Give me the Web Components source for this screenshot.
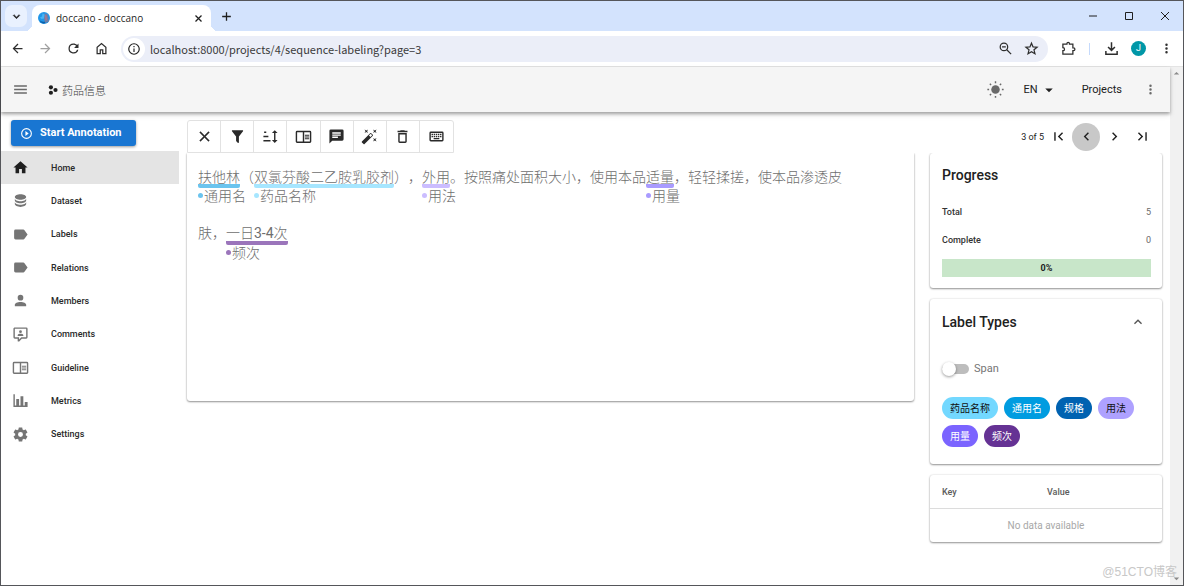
<!DOCTYPE html>
<html lang="zh-CN">
<head>
<meta charset="utf-8">
<title>doccano - doccano</title>
<style>
  html, body { height: 100%; margin: 0; }
  body { font: 10px/14px Roboto, "Noto Sans CJK SC", sans-serif; color: #212121; background: #fff; }
</style>
</head>
<body>
<browser-window>
  <app-bar slot="bar"></app-bar>
  <side-nav slot="nav">
    <nav-item icon="home" active>Home</nav-item>
    <nav-item icon="database">Dataset</nav-item>
    <nav-item icon="label">Labels</nav-item>
    <nav-item icon="label">Relations</nav-item>
    <nav-item icon="account">Members</nav-item>
    <nav-item icon="comment">Comments</nav-item>
    <nav-item icon="book">Guideline</nav-item>
    <nav-item icon="chart">Metrics</nav-item>
    <nav-item icon="cog">Settings</nav-item>
  </side-nav>
  <annotation-page></annotation-page>
</browser-window>

<script>
const define = (name, html, setup) => {
  const template = document.createElement('template');
  template.innerHTML = html;
  customElements.define(name, class extends HTMLElement {
    constructor() {
      super();
      this.attachShadow({ mode: 'open' }).append(template.content.cloneNode(true));
    }
    connectedCallback() { if (setup) setup(this, this.shadowRoot); }
  });
};

const ICONS = {
  home: '<path d="M10,20V14H14V20H19V12H22L12,3L2,12H5V20H10Z"/>',
  database: '<path d="M12,3C7.58,3 4,4.79 4,7C4,9.21 7.58,11 12,11C16.42,11 20,9.21 20,7C20,4.79 16.42,3 12,3M4,9V12C4,14.21 7.58,16 12,16C16.42,16 20,14.21 20,12V9C20,11.21 16.42,13 12,13C7.58,13 4,11.21 4,9M4,14V17C4,19.21 7.58,21 12,21C16.42,21 20,19.21 20,17V14C20,16.21 16.42,18 12,18C7.58,18 4,16.21 4,14Z"/>',
  label: '<path d="M17.63,5.84C17.27,5.33 16.67,5 16,5H5A2,2 0 0,0 3,7V17A2,2 0 0,0 5,19H16C16.67,19 17.27,18.66 17.63,18.15L22,12L17.63,5.84Z"/>',
  account: '<path d="M12,4A4,4 0 0,1 16,8A4,4 0 0,1 12,12A4,4 0 0,1 8,8A4,4 0 0,1 12,4M12,14C16.42,14 20,15.79 20,18V20H4V18C4,15.79 7.58,14 12,14Z"/>',
  comment: '<path d="M9,22A1,1 0 0,1 8,21V18H4A2,2 0 0,1 2,16V4C2,2.89 2.9,2 4,2H20A2,2 0 0,1 22,4V16A2,2 0 0,1 20,18H13.9L10.2,21.71C10,21.9 9.75,22 9.5,22H9M10,16V19.08L13.08,16H20V4H4V16H10M16,14H8V13C8,11.67 10.67,11 12,11C13.33,11 16,11.67 16,13V14M12,6A2,2 0 0,1 14,8A2,2 0 0,1 12,10A2,2 0 0,1 10,8A2,2 0 0,1 12,6Z"/>',
  book: '<path d="M21,4H3A2,2 0 0,0 1,6V19A2,2 0 0,0 3,21H21A2,2 0 0,0 23,19V6A2,2 0 0,0 21,4M3,19V6H11V19H3M21,19H13V6H21V19M14,9.5H20V11H14V9.5M14,12H20V13.5H14V12M14,14.5H20V16H14V14.5Z"/>',
  chart: '<path d="M22,21H2V3H4V19H6V10H10V19H12V6H16V19H18V14H22V21Z"/>',
  cog: '<path d="M12,15.5A3.5,3.5 0 0,1 8.5,12A3.5,3.5 0 0,1 12,8.5A3.5,3.5 0 0,1 15.5,12A3.5,3.5 0 0,1 12,15.5M19.43,12.97C19.47,12.65 19.5,12.33 19.5,12C19.5,11.67 19.47,11.34 19.43,11L21.54,9.37C21.73,9.22 21.78,8.95 21.66,8.73L19.66,5.27C19.54,5.05 19.27,4.96 19.05,5.05L16.56,6.05C16.04,5.66 15.5,5.32 14.87,5.07L14.5,2.42C14.46,2.18 14.25,2 14,2H10C9.75,2 9.54,2.18 9.5,2.42L9.13,5.07C8.5,5.32 7.96,5.66 7.44,6.05L4.95,5.05C4.73,4.96 4.46,5.05 4.34,5.27L2.34,8.73C2.21,8.95 2.27,9.22 2.46,9.37L4.57,11C4.53,11.34 4.5,11.67 4.5,12C4.5,12.33 4.53,12.65 4.57,12.97L2.46,14.63C2.27,14.78 2.21,15.05 2.34,15.27L4.34,18.73C4.46,18.95 4.73,19.03 4.95,18.95L7.44,17.94C7.96,18.34 8.5,18.68 9.13,18.93L9.5,21.58C9.54,21.82 9.75,22 10,22H14C14.25,22 14.46,21.82 14.5,21.58L14.87,18.93C15.5,18.67 16.04,18.34 16.56,17.94L19.05,18.95C19.27,19.03 19.54,18.95 19.66,18.73L21.66,15.27C21.78,15.05 21.73,14.78 21.54,14.63L19.43,12.97Z"/>',
  play: '<path d="M12,20C7.59,20 4,16.41 4,12C4,7.59 7.59,4 12,4C16.41,4 20,7.59 20,12C20,16.41 16.41,20 12,20M12,2A10,10 0 0,0 2,12A10,10 0 0,0 12,22A10,10 0 0,0 22,12A10,10 0 0,0 12,2M10,16.5L16,12L10,7.5V16.5Z"/>',
  close: '<path d="M19,6.41L17.59,5L12,10.59L6.41,5L5,6.41L10.59,12L5,17.59L6.41,19L12,13.41L17.59,19L19,17.59L13.41,12L19,6.41Z" stroke="currentColor" stroke-width=".4"/>',
  filter: '<path d="M14,12V19.88C14.04,20.18 13.94,20.5 13.71,20.71C13.32,21.1 12.69,21.1 12.3,20.71L10.29,18.7C10.06,18.47 9.96,18.16 10,17.87V12H9.97L4.21,4.62C3.87,4.19 3.95,3.56 4.38,3.22C4.57,3.08 4.78,3 5,3H19C19.22,3 19.43,3.08 19.62,3.22C20.05,3.56 20.13,4.19 19.79,4.62L14.03,12H14Z"/>',
  sort: '<path d="M19,7H22L18,3L14,7H17V17H14L18,21L22,17H19ZM2,17H12V19H2ZM6,5V7H3V5ZM2,11H9V13H2Z"/>',
  message: '<path d="M20,2H4A2,2 0 0,0 2,4V22L6,18H20A2,2 0 0,0 22,16V4A2,2 0 0,0 20,2M6,9H18V11H6V9M14,14H6V12H14V14M18,8H6V6H18V8Z"/>',
  wand: '<path d="M7.5,5.6L5,7L6.4,4.5L5,2L7.5,3.4L10,2L8.6,4.5L10,7L7.5,5.6M19.5,15.4L22,14L20.6,16.5L22,19L19.5,17.6L17,19L18.4,16.5L17,14L19.5,15.4M22,2L20.6,4.5L22,7L19.5,5.6L17,7L18.4,4.5L17,2L19.5,3.4L22,2M13.34,12.78L15.78,10.34L13.66,8.22L11.22,10.66L13.34,12.78M14.37,7.29L16.71,9.63C17.1,10 17.1,10.65 16.71,11.04L5.04,22.71C4.65,23.1 4,23.1 3.63,22.71L1.29,20.37C0.9,20 0.9,19.35 1.29,18.96L12.96,7.29C13.35,6.9 14,6.9 14.37,7.29Z"/>',
  trash: '<path d="M6,19A2,2 0 0,0 8,21H16A2,2 0 0,0 18,19V7H6V19M8,9H16V19H8V9M15.5,4L14.5,3H9.5L8.5,4H5V6H19V4H15.5Z"/>',
  keyboard: '<path d="M4,5A2,2 0 0,0 2,7V17A2,2 0 0,0 4,19H20A2,2 0 0,0 22,17V7A2,2 0 0,0 20,5H4M4,7H20V17H4V7M5,8V10H7V8H5M8,8V10H10V8H8M11,8V10H13V8H11M14,8V10H16V8H14M17,8V10H19V8H17M5,11V13H7V11H5M8,11V13H10V11H8M11,11V13H13V11H11M14,11V13H16V11H14M17,11V13H19V11H17M8,14V16H16V14H8Z"/>',
  first: '<path d="M18.41,16.59L13.82,12L18.41,7.41L17,6L11,12L17,18L18.41,16.59M6,6H8V18H6V6Z"/>',
  prev: '<path d="M15.41,16.58L10.83,12L15.41,7.41L14,6L8,12L14,18L15.41,16.58Z"/>',
  next: '<path d="M8.59,16.58L13.17,12L8.59,7.41L10,6L16,12L10,18L8.59,16.58Z"/>',
  last: '<path d="M5.59,7.41L10.18,12L5.59,16.59L7,18L13,12L7,6L5.59,7.41M16,6H18V18H16V6Z"/>',
  up: '<path d="M7.41,15.41L12,10.83L16.59,15.41L18,14L12,8L6,14L7.41,15.41Z"/>',
  down: '<path d="M7.41,8.59L12,13.17L16.59,8.59L18,10L12,16L6,10L7.41,8.59Z" stroke="currentColor"/>',
  caret: '<path d="M7,10L12,15L17,10H7Z"/>',
  dots: '<path d="M12,16A2,2 0 1,1 12,20A2,2 0 0,1 12,16M12,10A2,2 0 1,1 12,14A2,2 0 0,1 12,10M12,4A2,2 0 1,1 12,8A2,2 0 0,1 12,4Z"/>',
  menu: '<path d="M3,6H21V8H3V6M3,11H21V13H3V11M3,16H21V18H3V16Z"/>',
  sun: '<circle cx="12" cy="12" r="6"/><g stroke="currentColor" stroke-width="2"><path d="M12 .5v2.500M12 21v2.500M.5 12H3M21 12h2.500M4 4l1.800 1.800M18.200 18.200L20 20M4 20l1.800-1.800M18.200 5.800L20 4"/></g>',
  project: '<circle cx="7" cy="5.500" r="5"/><circle cx="7" cy="18.500" r="5"/><circle cx="18" cy="12" r="5"/>',
  back: '<path d="M20,11V13H8L13.5,18.5L12.08,19.92L4.16,12L12.08,4.08L13.5,5.5L8,11H20Z"/>',
  forward: '<path d="M4,11V13H16L10.5,18.5L11.92,19.92L19.84,12L11.92,4.08L10.5,5.5L16,11H4Z"/>',
  reload: '<path d="M17.65,6.35C16.2,4.9 14.21,4 12,4A8,8 0 1,0 19.73,14H17.65A6,6 0 1,1 12,6C13.66,6 15.14,6.69 16.22,7.78L13,11H20V4L17.65,6.35Z"/>',
  house: '<path d="M5 20V10l7-6 7 6v10h-5v-6h-4v6z" fill="none" stroke="currentColor" stroke-width="2"/>',
  info: '<circle cx="12" cy="12" r="9" fill="none" stroke="currentColor" stroke-width="2"/><path d="M11 11h2v6h-2zM11 7h2v2h-2z"/>',
  zoomout: '<circle cx="9.500" cy="9.500" r="6" fill="none" stroke="currentColor" stroke-width="2"/><path d="M14 14l7 7M6.500 9.500h6" stroke="currentColor" stroke-width="2"/>',
  star: '<path d="M12 3.500l2.500 5.900 6.400.500-4.900 4.200 1.500 6.200L12 17l-5.500 3.300L8 14.100 3.100 9.900l6.400-.500z" fill="none" stroke="currentColor" stroke-width="2"/>',
  puzzle: '<path d="M3 5h6.500V4a2 2 0 014 0v1H19v6h1a2 2 0 010 4.500h-1V21H3v-5.500c3.500 0 3.500-5 0-5z" fill="none" stroke="currentColor" stroke-width="2"/>',
  download: '<path d="M12 2v13M6.500 9.500L12 15l5.500-5.500M3 16v5h18v-5" fill="none" stroke="currentColor" stroke-width="2.400"/>',
  plus: '<path d="M12 4v16M4 12h16" stroke="currentColor" stroke-width="2.400"/>',
  tabclose: '<path d="M4 4l16 16M20 4L4 20" stroke="currentColor" stroke-width="3.400"/>',
  cross: '<path d="M4 4l16 16M20 4L4 20" stroke="currentColor" stroke-width="2"/>',
  minimize: '<path d="M4 12h16" stroke="currentColor" stroke-width="2"/>',
  maximize: '<path d="M5 5h14v14H5z" fill="none" stroke="currentColor" stroke-width="2"/>',
  favicon: '<circle cx="12" cy="12" r="12" fill="#2196e8"/><path d="M13 3l6 1 3 15-8 3-2-9z" fill="#6d7fa8"/><path d="M9 3l4 2-1 8-5 1-3-3 4-2z" fill="#48b4f5"/><path d="M3 16c3 3 6 4 10 3l2 3c-5 2-10 0-12-6z" fill="#0d5fa8"/><path d="M14 6l3 1 1 9-3 1z" fill="#b0768c"/>'
};

define('ui-icon', `
<style>
  :host { display: inline-flex; flex: none; width: var(--size, 17px); height: var(--size, 17px); }
  svg { width: 100%; height: 100%; fill: currentColor; }
</style>
<svg viewBox="0 0 24 24" aria-hidden="true"></svg>`, (host, root) => {
  root.querySelector('svg').innerHTML = ICONS[host.getAttribute('name')];
});

define('icon-button', `
<style>
  :host { display: inline-flex; flex: none; }
  button { display: flex; align-items: center; justify-content: center; width: var(--box, 28px); height: var(--box, 28px);
    padding: 0; border: 0; border-radius: 50%; background: var(--fill, none); color: inherit; }
</style>
<button></button>`, (host, root) => {
  const button = root.querySelector('button');
  button.setAttribute('aria-label', host.getAttribute('label'));
  button.innerHTML = `<ui-icon name="${host.getAttribute('name')}"></ui-icon>`;
});

define('tab-strip', `
<style>
  :host { display: flex; align-items: flex-end; height: 30px; background: #d3e3fd; color: #1f1f1f; }
  .pick { display: flex; align-items: center; justify-content: center; width: 22px; height: 22px; margin: 0 5px 4px 4px; padding: 0;
    border: 0; border-radius: 7px; background: #e9f1fe; color: inherit; --size: 13px; }
  .tab { display: flex; align-items: center; box-sizing: border-box; width: 179px; height: 26px; padding: 0 4px 0 6px;
    border-radius: 8px 8px 0 0; background: #fff; position: relative; font: 10px/14px "Open Sans", "Noto Sans", sans-serif; }
  .tab::before, .tab::after { content: ""; position: absolute; bottom: 0; width: 7px; height: 7px; }
  .tab::before { right: 100%; background: radial-gradient(circle at 0 0, transparent 7px, #fff 7px); }
  .tab::after { left: 100%; background: radial-gradient(circle at 100% 0, transparent 7px, #fff 7px); }
  .tab span { flex: 1; margin-left: 6px; }
  .tab > ui-icon { --size: 12px; }
  .tab icon-button { --box: 18px; --size: 9px; }
  .new { --box: 22px; --size: 13px; margin: 0 auto 4px 4px; }
  .controls { display: flex; gap: 8px; margin: 0 4px 1px 0; --size: 12px; }
</style>
<button class="pick" aria-label="Search tabs"><ui-icon name="down"></ui-icon></button>
<div class="tab"><ui-icon name="favicon"></ui-icon><span>doccano - doccano</span><icon-button name="tabclose" label="Close tab"></icon-button></div>
<icon-button class="new" name="plus" label="New tab"></icon-button>
<div class="controls">
  <icon-button name="minimize" label="Minimize"></icon-button>
  <icon-button name="maximize" label="Maximize"></icon-button>
  <icon-button name="cross" label="Close window"></icon-button>
</div>`);

define('address-bar', `
<style>
  :host { display: flex; align-items: center; height: 35px; padding: 0 3px 0 2px; background: #fff; color: #2e2e2e; border-bottom: 1px solid #e4e4e4; --size: 15px; }
  .off { color: #a0a0a0; }
  .pill { flex: 1; display: flex; align-items: center; height: 26px; margin: 0 6px; padding: 0 4px 0 2px; border-radius: 13px; background: #ebeef8; }
  .site { --box: 22px; --fill: #fff; --size: 14px; color: #1f1f1f; }
  .pill input ~ icon-button { --box: 26px; }
  input { flex: 1; min-width: 0; margin: 0 0 0 5px; padding: 0; border: 0; background: none; color: #3a3a3a; font: 11px/16px "Noto Sans CJK SC", sans-serif; }
  hr { width: 1px; height: 12px; margin: 0 7px; border: 0; background: #c5dafc; }
  .user { width: 15px; height: 15px; margin: 0 6px; padding: 0; border: 0; border-radius: 50%; background: #0097a7; color: #fff; font: 9px/15px Roboto, sans-serif; }
</style>
<icon-button name="back" label="Back"></icon-button>
<icon-button class="off" name="forward" label="Forward"></icon-button>
<icon-button name="reload" label="Reload"></icon-button>
<icon-button name="house" label="Home page"></icon-button>
<div class="pill">
  <icon-button class="site" name="info" label="Site information"></icon-button>
  <input aria-label="Address" value="localhost:8000/projects/4/sequence-labeling?page=3">
  <icon-button name="zoomout" label="Zoom"></icon-button>
  <icon-button name="star" label="Bookmark"></icon-button>
</div>
<icon-button name="puzzle" label="Extensions"></icon-button>
<hr>
<icon-button name="download" label="Downloads"></icon-button>
<button class="user" aria-label="Profile">J</button>
<icon-button name="dots" label="Browser menu"></icon-button>`);

define('browser-window', `
<style>
  :host { display: flex; flex-direction: column; box-sizing: border-box; min-height: 100%; border: 1px solid #55565a; background: #fff; }
  .view { flex: 1; display: flex; }
  .app { flex: 1; min-width: 0; }
  .body { display: flex; align-items: flex-start; }
  slot[name=nav] { display: block; flex: none; width: 178px; }
  .page { flex: 1; min-width: 0; }
  .scroll { display: flex; flex-direction: column; justify-content: space-between; align-items: center; width: 13px; background: #f1f1f1; color: #8a8a8a; --size: 13px; }
  .scroll ui-icon:first-child { transform: rotate(180deg); }
  .mark { position: absolute; right: 7px; bottom: 4px; color: #c8c8c8; font: 12px/20px "Liberation Sans", "Noto Sans CJK SC", sans-serif; }
</style>
<tab-strip></tab-strip>
<address-bar></address-bar>
<div class="view">
  <div class="app">
    <slot name="bar"></slot>
    <div class="body"><slot name="nav"></slot><div class="page"><slot></slot></div></div>
  </div>
  <div class="scroll"><ui-icon name="caret"></ui-icon><ui-icon name="caret"></ui-icon></div>
</div>
<div class="mark">@51CTO博客</div>`);

define('app-bar', `
<style>
  :host { display: flex; align-items: center; height: 45px; padding: 0 6px 0 5px; background: #f5f5f5; color: #6a6a6a;
    box-shadow: 0 2px 3px rgba(0,0,0,.3), 0 3px 6px rgba(0,0,0,.1); position: relative; z-index: 2; }
  .title { display: flex; align-items: center; gap: 4px; margin: 0 auto 0 14px; color: #1f1f1f; --size: 10px; text-decoration: none; }
  .title span { color: #3c3c3c; font: 300 11px/16px "Noto Sans CJK SC", sans-serif; }
  button, .link { display: flex; align-items: center; gap: 2px; height: 28px; padding: 0; border: 0; background: none; color: #212121;
    font: 400 11px/14px Roboto, sans-serif; text-decoration: none; }
  button { margin: 0 24px 0 14px; --size: 18px; }
  .more { --size: 15px; margin-left: 14px; }
</style>
<icon-button name="menu" label="Toggle navigation"></icon-button>
<a class="title" href="#"><ui-icon name="project"></ui-icon><span>药品信息</span></a>
<icon-button name="sun" label="Toggle theme"></icon-button>
<button>EN<ui-icon name="caret"></ui-icon></button>
<a class="link" href="#">Projects</a>
<icon-button class="more" name="dots" label="More"></icon-button>`);

define('side-nav', `
<style>
  :host { display: block; padding-top: 8px; }
  button { display: flex; align-items: center; gap: 7px; height: 26px; margin: 0 0 5px 10px; padding: 0 14px 0 9px; border: 0; border-radius: 3px;
    background: #1976d2; color: #fff; font: 700 11px/14px Roboto, sans-serif; box-shadow: 0 1px 3px rgba(0,0,0,.4); --size: 13px; }
  nav { display: grid; grid-auto-rows: 1fr; height: 300px; }
</style>
<button><ui-icon name="play"></ui-icon>Start Annotation</button>
<nav><slot></slot></nav>`);

define('nav-item', `
<style>
  :host { display: flex; color: #757575; }
  :host([active]) { background: #e4e4e4; color: #1f1f1f; }
  a { flex: 1; display: flex; align-items: center; gap: 22px; padding: 0 11px; color: inherit; text-decoration: none; }
  span { color: #2a2a2a; font: 500 9px/14px Roboto, sans-serif; }
</style>
<a href="#"><i></i><span><slot></slot></span></a>`, (host, root) => {
  root.querySelector('i').outerHTML = `<ui-icon name="${host.getAttribute('icon')}"></ui-icon>`;
});

define('tool-bar', `
<style>
  :host { display: grid; grid-template-columns: repeat(8, 1fr); box-sizing: border-box; width: 267px; height: 33px; border: 1px solid #e2e2e2; border-radius: 3px 3px 0 0; color: #2a2a2a; }
  button { display: flex; align-items: center; justify-content: center; padding: 0; border: 0; border-right: 1px solid #e2e2e2; background: none; color: inherit; }
  button:last-child { border-right: 0; }
</style>
<button aria-label="Clear"><ui-icon name="close"></ui-icon></button>
<button aria-label="Filter"><ui-icon name="filter"></ui-icon></button>
<button aria-label="Sort"><ui-icon name="sort"></ui-icon></button>
<button aria-label="Guideline"><ui-icon name="book"></ui-icon></button>
<button aria-label="Comments"><ui-icon name="message"></ui-icon></button>
<button aria-label="Auto labeling"><ui-icon name="wand"></ui-icon></button>
<button aria-label="Delete"><ui-icon name="trash"></ui-icon></button>
<button aria-label="Shortcuts"><ui-icon name="keyboard"></ui-icon></button>`);

define('page-nav', `
<style>
  :host { display: flex; align-items: center; color: #212121; font-size: 9px; }
  .on { --fill: #c8c8c8; }
</style>
<span>3 of 5</span>
<icon-button name="first" label="First page"></icon-button>
<icon-button class="on" name="prev" label="Previous page"></icon-button>
<icon-button name="next" label="Next page"></icon-button>
<icon-button name="last" label="Last page"></icon-button>`);

define('entity-span', `
<style>
  :host { display: block; flex: none; }
  .text { display: block; border-bottom: 4px solid var(--mark); border-radius: 0 0 2px 2px; }
  .label { display: flex; align-items: center; gap: 1px; width: 0; white-space: nowrap; line-height: 14px; }
  .label::before { content: ""; flex: none; width: 5px; height: 5px; border-radius: 50%; background: var(--mark); }
</style>
<span class="text"><slot></slot></span><span class="label"></span>`, (host, root) => {
  host.style.setProperty('--mark', host.getAttribute('color'));
  root.querySelector('.label').textContent = host.getAttribute('label');
});

define('doc-card', `
<style>
  :host { display: block; box-sizing: border-box; min-height: 248px; padding: 15px 11px; border-radius: 0 0 3px 3px; background: #fff;
    box-shadow: 0 1px 2px rgba(0,0,0,.4), 0 0 2px rgba(0,0,0,.15); color: #6e6e6e; font: 300 14px/16px "Noto Sans CJK SC", sans-serif; text-spacing-trim: space-all; }
  p { display: flex; align-items: flex-start; margin: 0 0 22px; white-space: nowrap; }
  b { font: 400 14px/16px Roboto, sans-serif; }
</style>
<p><entity-span label="通用名" color="#6bc4ee">扶他林</entity-span>（<entity-span label="药品名称" color="#a6e6ff">双氯芬酸二乙胺乳胶剂</entity-span>），<entity-span label="用法" color="#cbbdff">外用</entity-span>。按照痛处面积大小，使用本品<entity-span label="用量" color="#a99bff">适量</entity-span>，轻轻揉搓，使本品渗透皮</p>
<p>肤，<entity-span label="频次" color="#9b75bb">一日<b>3-4</b>次</entity-span></p>`);

define('side-card', `
<style>
  :host { display: block; border-radius: 3px; background: #fff; box-shadow: 0 1px 2px rgba(0,0,0,.4), 0 0 2px rgba(0,0,0,.15); }
</style>
<slot></slot>`);

define('label-chip', `
<style>
  :host { display: block; padding: 0 8px; border-radius: 11px; background: var(--chip); color: var(--ink, #fff); font: 10px/22px "Noto Sans CJK SC", sans-serif; }
</style>
<slot></slot>`, host => {
  host.style.setProperty('--chip', host.getAttribute('color'));
  if (host.hasAttribute('dark')) host.style.setProperty('--ink', '#111');
});

define('progress-card', `
<style>
  :host { display: block; }
  .pad { padding: 12px 11px 11px 12px; }
  h2 { margin: 0 0 20px; font: 500 14px/20px Roboto, sans-serif; }
  dl { display: grid; grid-template-columns: 1fr auto; row-gap: 14px; margin: 0 0 12px; color: #333; font: 500 9px/14px Roboto, sans-serif; }
  dd { margin: 0; color: #6a6a6a; font-weight: 400; }
  .bar { height: 18px; background: #c8e6c9; text-align: center; font: 700 9px/18px Roboto, sans-serif; }
</style>
<side-card><div class="pad">
  <h2>Progress</h2>
  <dl><dt>Total</dt><dd>5</dd><dt>Complete</dt><dd>0</dd></dl>
  <div class="bar" role="progressbar" aria-valuenow="0" aria-valuemin="0" aria-valuemax="100">0%</div>
</div></side-card>`);

define('label-types', `
<style>
  :host { display: block; }
  .pad { padding: 9px 11px 17px 12px; }
  header { display: flex; align-items: center; justify-content: space-between; margin-bottom: 22px; }
  h2 { margin: 0; font: 500 14px/28px Roboto, sans-serif; }
  header icon-button { color: #555; --size: 16px; --box: 26px; }
  label { display: flex; align-items: center; gap: 5px; height: 22px; margin-bottom: 17px; color: #757575; font: 11px/16px Roboto, sans-serif; }
  input { appearance: none; display: flex; align-items: center; width: 27px; height: 10px; margin: 0; border-radius: 5px; background: #bdbdbd; }
  input::before { content: ""; width: 14px; height: 14px; flex: none; border-radius: 50%; background: #fff; box-shadow: 0 1px 3px rgba(0,0,0,.4); }
  .chips { display: flex; flex-wrap: wrap; gap: 6px; }
</style>
<side-card><div class="pad">
  <header><h2>Label Types</h2><icon-button name="up" label="Collapse"></icon-button></header>
  <label><input type="checkbox" role="switch">Span</label>
  <div class="chips">
    <label-chip color="#73d8ff" dark>药品名称</label-chip>
    <label-chip color="#009ce0">通用名</label-chip>
    <label-chip color="#0062b1">规格</label-chip>
    <label-chip color="#aea1ff" dark>用法</label-chip>
    <label-chip color="#7b64ff">用量</label-chip>
    <label-chip color="#653294">频次</label-chip>
  </div>
</div></side-card>`);

define('meta-table', `
<style>
  :host { display: block; }
  table { width: 100%; border-collapse: collapse; table-layout: fixed; }
  th { height: 33px; padding: 0 12px; border-bottom: 1px solid #dcdcdc; color: #5c5c5c; text-align: left; font: 500 9px/14px Roboto, sans-serif; }
  th:first-child { width: 81px; }
  td { height: 33px; padding: 0; color: #a8a8a8; text-align: center; font: 10px/14px Roboto, sans-serif; }
</style>
<side-card><table>
  <thead><tr><th>Key</th><th>Value</th></tr></thead>
  <tbody><tr><td colspan="2">No data available</td></tr></tbody>
</table></side-card>`);

define('annotation-page', `
<style>
  :host { display: block; padding: 0 8px; }
  .head { display: flex; align-items: flex-end; justify-content: space-between; height: 41px; background: #fff; position: relative; z-index: 1; }
  page-nav { height: 33px; margin-right: 6px; }
  .cols { display: grid; grid-template-columns: minmax(0, 1fr) 232px; gap: 16px; align-items: start; }
  aside { display: grid; gap: 11px; }
</style>
<div class="head"><tool-bar></tool-bar><page-nav></page-nav></div>
<div class="cols">
  <doc-card></doc-card>
  <aside><progress-card></progress-card><label-types></label-types><meta-table></meta-table></aside>
</div>`);
</script>
</body>
</html>
